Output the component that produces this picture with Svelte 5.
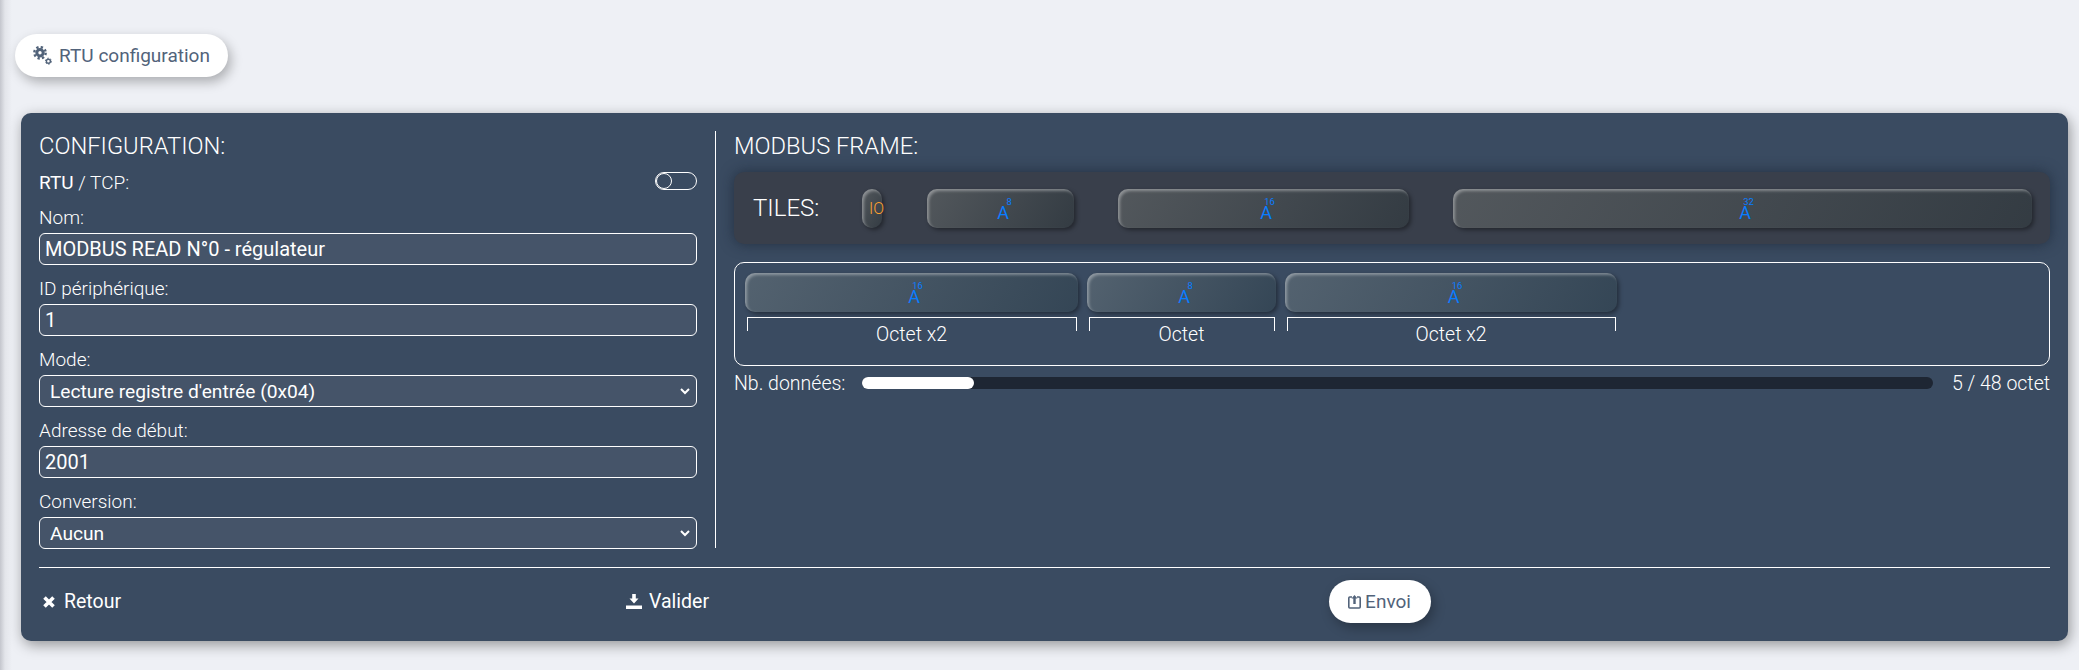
<script>
	const fields = [
		{ label: 'Nom:', value: 'MODBUS READ N°0 - régulateur' },
		{ label: 'ID périphérique:', value: '1' },
		{ label: 'Mode:', value: "Lecture registre d'entrée (0x04)", select: true },
		{ label: 'Adresse de début:', value: '2001' },
		{ label: 'Conversion:', value: 'Aucun', select: true }
	];

	const tiles = [
		{ bits: 8, width: 147 },
		{ bits: 16, width: 291 },
		{ bits: 32, width: 579 }
	];

	const frame = [
		{ bits: 16, width: 333, name: 'Octet x2' },
		{ bits: 8, width: 189, name: 'Octet' },
		{ bits: 16, width: 332, name: 'Octet x2' }
	];

	const used = 5;
	const total = 48;
</script>

<div class="page">
	<button class="pill top">
		<svg width="19" height="19" viewBox="0 0 19 19">
			<circle cx="7" cy="6.8" r="3.2" fill="none" stroke="#52637a" stroke-width="3" />
			<circle cx="7" cy="6.8" r="5.7" fill="none" stroke="#52637a" stroke-width="2.4" stroke-dasharray="2.3 2.18" />
			<circle cx="15.4" cy="15.2" r="2" fill="none" stroke="#52637a" stroke-width="1.4" />
			<circle cx="15.4" cy="15.2" r="3" fill="none" stroke="#52637a" stroke-width="1" stroke-dasharray="1.6 1.54" />
		</svg>
		RTU configuration
	</button>

	<section class="card">
		<div class="columns">
			<div class="left">
				<h5>CONFIGURATION:</h5>
				<div class="switch-row">
					<span><b>RTU</b> / TCP:</span>
					<span class="switch"><i></i></span>
				</div>
				{#each fields as f}
					<label class="field">
						<span>{f.label}</span>
						{#if f.select}
							<select>
								<option>{f.value}</option>
							</select>
						{:else}
							<input type="text" value={f.value} />
						{/if}
					</label>
				{/each}
			</div>

			<div class="right">
				<h5>MODBUS FRAME:</h5>
				<div class="tilebox">
					<span class="tiles-title">TILES:</span>
					<div class="tile io"><span>IO</span></div>
					{#each tiles as t}
						<div class="tile" style="width: {t.width}px">
							<span class="glyph">A<sup>{t.bits}</sup></span>
						</div>
					{/each}
				</div>

				<div class="framebox">
					{#each frame as t}
						<div class="slot" style="width: {t.width}px">
							<div class="tile">
								<span class="glyph">A<sup>{t.bits}</sup></span>
							</div>
							<div class="bracket"></div>
							<div class="slot-name">{t.name}</div>
						</div>
					{/each}
				</div>

				<div class="progress-row">
					<span class="plabel">Nb. données:</span>
					<div class="bar"><div class="fill" style="width: {(used / total) * 100}%"></div></div>
					<span class="pcount">{used} / {total} octet</span>
				</div>
			</div>
		</div>

		<hr />

		<div class="footer">
			<div class="actions">
				<button class="flat">
					<svg width="14" height="14" viewBox="0 0 14 14">
						<path d="M2.5 2.5 L11.5 11.5 M11.5 2.5 L2.5 11.5" stroke="#fff" stroke-width="3.6" />
					</svg>
					Retour
				</button>
				<button class="flat">
					<svg width="16" height="15" viewBox="0 0 16 15">
						<path d="M6.2 0 H9.8 V4.5 H12.5 L8 9.5 L3.5 4.5 H6.2 Z M0 11.5 H16 V15 H0 Z" fill="#fff" />
					</svg>
					Valider
				</button>
			</div>
			<div class="send">
				<button class="pill">
					<svg width="13" height="15" viewBox="0 0 13 15">
						<path d="M4 3 H1.8 Q0.8 3 0.8 4 V13 Q0.8 14 1.8 14 H11.2 Q12.2 14 12.2 13 V4 Q12.2 3 11.2 3 H9" fill="none" stroke="#52637a" stroke-width="1.6" />
						<path d="M6.5 1 L9.5 4.5 H7.7 V10 H5.3 V4.5 H3.5 Z" fill="#52637a" />
					</svg>
					Envoi
				</button>
			</div>
		</div>
	</section>
</div>

<style>
	:global(body) {
		margin: 0;
		background: linear-gradient(to right, #c4c6cd, #e3e5ea 5px, #eef0f5 12px);
		font-family: Roboto, "Liberation Sans", sans-serif;
	}

	.page {
		height: 670px;
		box-sizing: border-box;
		padding: 34px 11px 0 21px;
	}

	button {
		font-family: inherit;
		cursor: pointer;
	}

	.pill {
		display: inline-flex;
		align-items: center;
		justify-content: center;
		height: 43px;
		border: 0;
		border-radius: 22px;
		background: #fff;
		color: #52637a;
		font-size: 19px;
		box-shadow: 3px 5px 12px rgba(0, 0, 0, 0.28);
	}

	.top {
		width: 213px;
		margin-left: -6px;
		gap: 7px;
	}

	.card {
		margin-top: 36px;
		height: 528px;
		box-sizing: border-box;
		padding: 18px;
		background: #3a4b61;
		border-radius: 10px;
		color: #fff;
		box-shadow: 2px 4px 14px rgba(0, 0, 0, 0.38);
	}

	.columns {
		display: flex;
		height: 417px;
		margin-bottom: 19px;
	}

	.left {
		width: 658px;
		padding-right: 18px;
		border-right: 1px solid #fff;
	}

	.right {
		flex: 1;
		padding-left: 18px;
		min-width: 0;
	}

	h5 {
		margin: 0;
		height: 30px;
		font-size: 23.7px;
		line-height: 30px;
		font-weight: 300;
	}

	.switch-row {
		display: flex;
		justify-content: space-between;
		align-items: center;
		height: 33px;
		box-sizing: border-box;
		padding-top: 9px;
		font-size: 19px;
		font-weight: 300;
	}

	.switch-row b {
		font-weight: 400;
	}

	.switch {
		width: 42px;
		height: 18px;
		box-sizing: border-box;
		border: 1px solid #fff;
		border-radius: 9px;
		margin-top: -2px;
	}

	.switch i {
		display: block;
		width: 16px;
		height: 16px;
		box-sizing: border-box;
		border: 1px solid #fff;
		border-radius: 50%;
	}

	.field {
		display: block;
		height: 71px;
	}

	.field span {
		display: block;
		height: 39px;
		box-sizing: border-box;
		padding-top: 9px;
		line-height: 30px;
		font-size: 19px;
		font-weight: 300;
	}

	input,
	select {
		display: block;
		width: 100%;
		height: 32px;
		box-sizing: border-box;
		padding: 0 5px;
		background-color: #455469;
		border: 1px solid #fff;
		border-radius: 6px;
		color: #fff;
		font-family: inherit;
		font-size: 20px;
		outline: none;
	}

	select {
		appearance: none;
		padding: 0 10px;
		font-size: 19.2px;
		background-image: url("data:image/svg+xml,%3Csvg xmlns='http://www.w3.org/2000/svg' width='10' height='7'%3E%3Cpath d='M1 1 L5 5 L9 1' fill='none' stroke='white' stroke-width='2'/%3E%3C/svg%3E");
		background-repeat: no-repeat;
		background-position: right 6px center;
	}

	.tilebox {
		display: flex;
		align-items: center;
		height: 72px;
		margin-top: 11px;
		padding-left: 19px;
		box-sizing: border-box;
		border-radius: 10px;
		background: #393f4b;
		box-shadow: 0 0 14px rgba(20, 30, 45, 0.6);
		gap: 44px;
	}

	.tiles-title {
		width: 65px;
		font-size: 24px;
		font-weight: 300;
	}

	.tile {
		position: relative;
		display: flex;
		align-items: center;
		justify-content: center;
		height: 39px;
		box-sizing: border-box;
		border-radius: 10px;
		background: linear-gradient(120deg, rgba(255, 255, 210, 0.13), rgba(20, 40, 20, 0.15));
		box-shadow:
			inset 2px 2px 3px rgba(255, 255, 255, 0.35),
			2px 2px 4px rgba(0, 0, 0, 0.4);
	}

	.io {
		width: 20px;
		justify-content: flex-start;
		padding-left: 7px;
		margin-right: 1px;
		color: #ffa02e;
		font-size: 16px;
		font-weight: 300;
	}

	.glyph {
		position: relative;
		color: #0a7cff;
		font-size: 18px;
		line-height: 18px;
		margin: 9px 0 0 5px;
	}

	.glyph sup {
		position: absolute;
		right: -3px;
		top: -7px;
		font-size: 9.5px;
		line-height: 10px;
	}

	.framebox {
		display: flex;
		gap: 9px;
		height: 104px;
		margin-top: 18px;
		padding: 10px;
		box-sizing: border-box;
		border: 1px solid #fff;
		border-radius: 10px;
	}

	.bracket {
		height: 13px;
		margin: 5px 1px 0 2px;
		border: 1px solid #fff;
		border-bottom: 0;
	}

	.slot-name {
		margin-top: -8px;
		text-align: center;
		font-size: 19.5px;
		line-height: 24px;
		font-weight: 300;
	}

	.progress-row {
		display: flex;
		align-items: center;
		height: 34px;
		font-size: 19.5px;
		font-weight: 300;
	}

	.plabel {
		width: 128px;
		flex: none;
	}

	.bar {
		flex: 1;
		height: 12px;
		border-radius: 6px;
		background: #1e2633;
	}

	.fill {
		height: 100%;
		border-radius: 6px;
		background: #fff;
	}

	.pcount {
		width: 117px;
		flex: none;
		text-align: right;
	}

	hr {
		margin: 0;
		border: 0;
		border-top: 1px solid #fff;
	}

	.footer {
		display: flex;
		align-items: center;
		height: 67px;
	}

	.actions {
		width: 670px;
		display: flex;
		justify-content: space-between;
		padding: 0 0 0 3px;
		box-sizing: border-box;
	}

	.flat {
		display: inline-flex;
		align-items: center;
		gap: 8px;
		padding: 0;
		background: none;
		border: 0;
		color: #fff;
		font-size: 19.5px;
	}

	.flat:last-child {
		gap: 7px;
	}

	.send {
		flex: 1;
		display: flex;
		justify-content: center;
	}

	.send .pill {
		width: 102px;
		gap: 4px;
	}
</style>
